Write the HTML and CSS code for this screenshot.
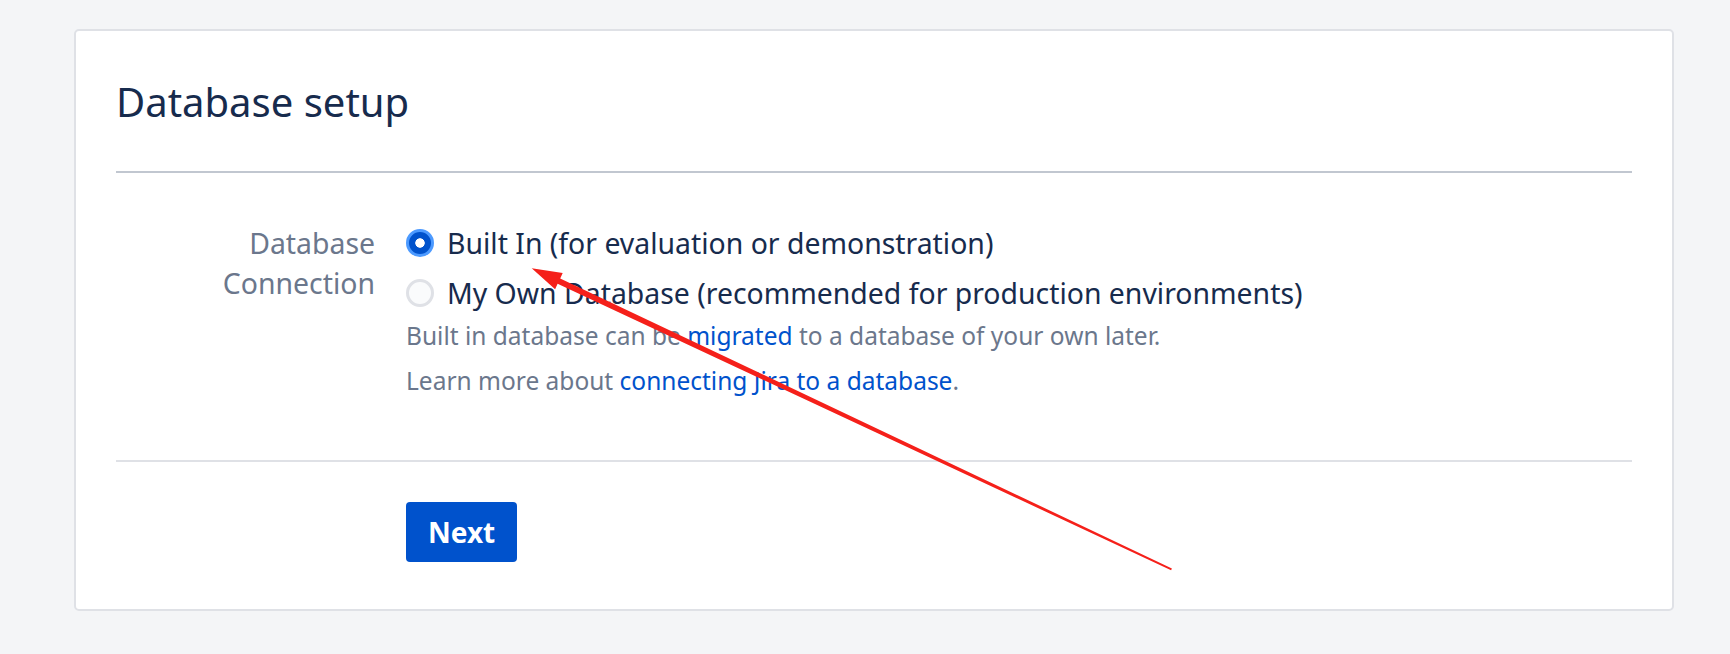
FILE: index.html
```html
<!DOCTYPE html>
<html lang="en">
<head>
<meta charset="utf-8">
<title>Database setup</title>
<link rel="stylesheet" href="styles.css">
</head>
<body>
<main class="card">
  <header class="card-header">
    <h1 class="title">Database setup</h1>
  </header>
  <section class="card-body">
    <div class="field">
      <div class="field-label">Database<br>Connection</div>
      <div class="field-control">
        <label class="option">
          <input class="radio" type="radio" name="db" checked>
          <span>Built In (for evaluation or demonstration)</span>
        </label>
        <label class="option">
          <input class="radio" type="radio" name="db">
          <span>My Own Database (recommended for production environments)</span>
        </label>
        <p class="desc">Built in database can be <a href="#">migrated</a> to a database of your own later.</p>
        <p class="desc desc-gap">Learn more about <a href="#">connecting Jira to a database</a>.</p>
      </div>
    </div>
  </section>
  <footer class="card-footer">
    <button class="btn-primary" type="button">Next</button>
  </footer>
</main>
<svg class="annotation" width="1730" height="654" viewBox="0 0 1730 654" aria-hidden="true">
  <polygon fill="#f5201a" points="531.7,268.3 562.7,272.9 560.2,278.4 1171.9,568.4 1171.1,570.2 557.6,283.8 555.1,289.2"/>
</svg>
</body>
</html>
```
FILE: styles.css
```css
html, body {
  margin: 0;
  padding: 0;
}
body {
  background: #f4f5f7;
  font-family: "Noto Sans", "Open Sans", sans-serif;
  color: #172b4d;
  position: relative;
  width: 1730px;
  height: 654px;
  overflow: hidden;
}
.card {
  display: flex;
  flex-direction: column;
  box-sizing: border-box;
  margin: 29px 0 0 74px;
  width: 1600px;
  height: 582px;
  background: #fff;
  border: 2px solid #dfe1e6;
  border-radius: 5px;
  padding: 0 40px;
}
.card-header {
  padding: 44px 0 42px;
  border-bottom: 2px solid #c1c7d0;
}
.title {
  margin: 0;
  font-size: 40px;
  line-height: 54px;
  font-weight: 400;
  color: #172b4d;
}
.card-body {
  padding: 45px 0 0;
  height: 289px;
  flex: none;
  box-sizing: border-box;
  border-bottom: 2px solid #dfe1e6;
}
.field {
  display: grid;
  grid-template-columns: 259px 1fr;
  column-gap: 31px;
}
.field-label {
  text-align: right;
  color: #6b778c;
  font-size: 28.4px;
  line-height: 40px;
  margin-top: 5px;
}
.field-control {
  display: flex;
  flex-direction: column;
}
.option {
  display: flex;
  align-items: center;
  gap: 13px;
  height: 50px;
  font-size: 28.4px;
  line-height: 50px;
  color: #172b4d;
}
.radio {
  appearance: none;
  -webkit-appearance: none;
  margin: 0;
  flex: none;
  width: 28px;
  height: 28px;
  box-sizing: border-box;
  border-radius: 50%;
  border: 3px solid #dfe1e6;
  background: #fafbfc;
}
.radio:checked {
  border-color: #4c9aff;
  background: radial-gradient(circle, #fff 0 4.4px, #0052cc 5px);
}
.desc {
  margin: 0;
  font-size: 24.5px;
  line-height: 35px;
  color: #6b778c;
}
.desc-gap {
  margin-top: 10px;
}
.desc a {
  color: #0052cc;
  text-decoration: none;
}
.card-footer {
  padding: 40px 0 0 290px;
}
.btn-primary {
  height: 60px;
  padding: 0 22px;
  border: none;
  border-radius: 4px;
  background: #0052cc;
  color: #fff;
  font-family: "Noto Sans", "Open Sans", sans-serif;
  font-size: 28px;
  font-weight: 700;
  line-height: 60px;
}
.annotation {
  position: absolute;
  left: 0;
  top: 0;
  pointer-events: none;
}
```
